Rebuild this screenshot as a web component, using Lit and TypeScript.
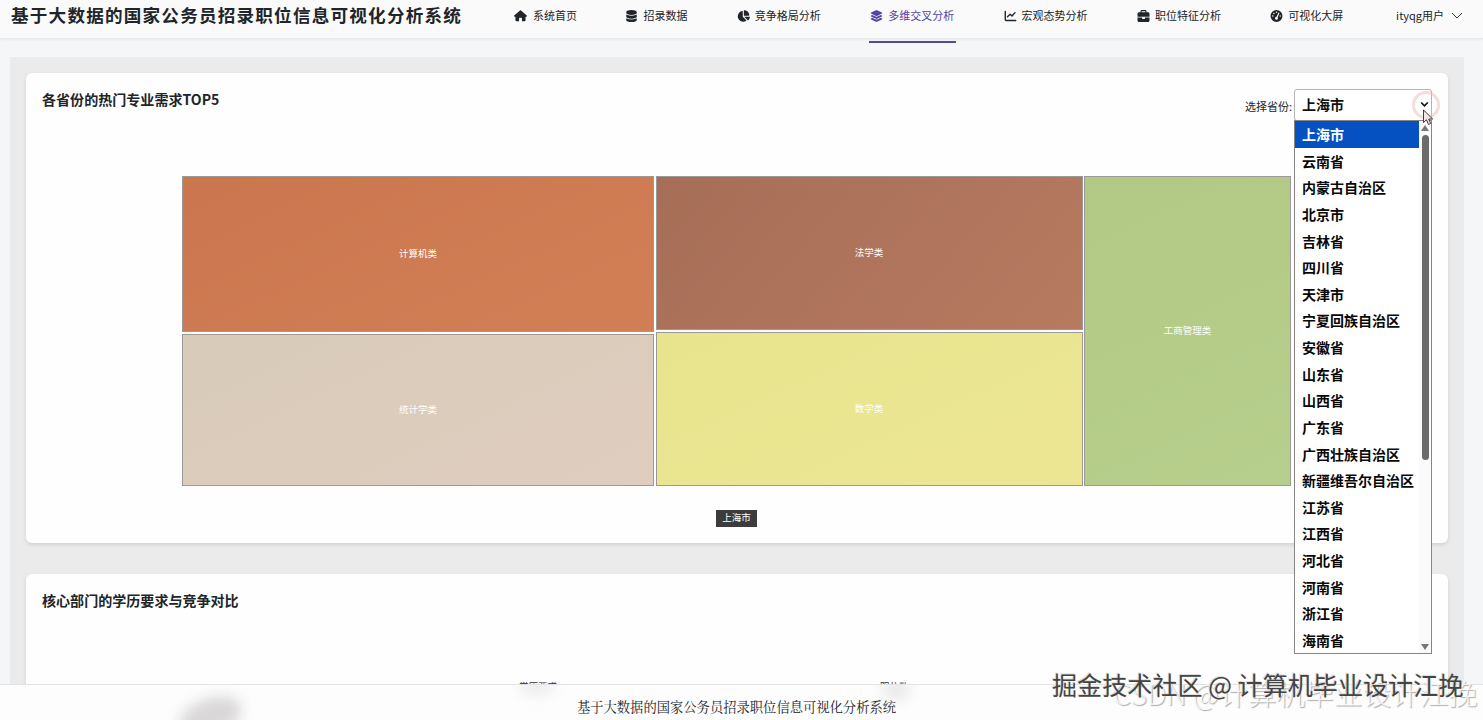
import { LitElement, html, css, svg } from "lit";
import { customElement } from "lit/decorators.js";

const icons: Record<string, { box: string; body: unknown }> = {
  home: { box: "0 0 576 512", body: svg`<path d="M575.8 255.500c0 18-15 32.100-32 32.100h-32l.7 160.200c0 22.100-17.900 40.200-40 40.200H352V360c0-13.300-10.700-24-24-24h-80c-13.300 0-24 10.700-24 24v128H104c-22 0-40-18-40-40V287.600H32c-18 0-32-14-32-32.100 0-9 3-17 10-24L266.400 8c7-7 15-8 22-8s15 2 21 7l255.400 224.500c8 7 12 15 11 24z"/>` },
  db: { box: "0 0 448 512", body: svg`<path d="M448 80v48c0 44-100 80-224 80S0 172 0 128V80C0 36 100 0 224 0s224 36 224 80zM393 215c21-7 40-17 55-28v101c0 44-100 80-224 80S0 332 0 288V187c15 11 34 21 55 28 44 16 104 25 169 25s125-9 169-25zM0 347c15 11 34 21 55 28 44 16 104 25 169 25s125-9 169-25c21-7 40-17 55-28v85c0 44-100 80-224 80S0 476 0 432z"/>` },
  pie: { box: "0 0 576 512", body: svg`<path d="M304 240V16.600c0-9 7-16.600 16-16.600 124 0 224 100 224 224 0 9-7.600 16-16.600 16zM32 272C32 151 122 50 239 34c9-1 17 6 17 15v239l157 157c7 7 6 18-2 23-39 28-87 44-139 44C140 512 32 405 32 272zm526 16c9 0 16 8 15 17-8 56-35 106-74 143-6 6-16 5-22-1L320 288z"/>` },
  layers: { box: "0 0 576 512", body: svg`<path d="M265 5c15-7 31-7 46 0l219 101c8 4 14 13 14 22s-6 18-14 22L311 251c-15 7-31 7-46 0L46 150c-8-4-14-13-14-22s6-18 14-22zM477 210l53 24c8 4 14 13 14 22s-6 18-14 22L311 379c-15 7-31 7-46 0L46 278c-8-4-14-13-14-22s6-18 14-22l53-24 152 70c24 11 50 11 74 0zM325 408l152-70 53 24c8 4 14 13 14 22s-6 18-14 22L311 507c-15 7-31 7-46 0L46 406c-8-4-14-13-14-22s6-18 14-22l53-24 152 70c24 11 50 11 74 0z"/>` },
  line: { box: "0 0 512 512", body: svg`<path fill="none" stroke="currentColor" stroke-width="60" stroke-linecap="round" stroke-linejoin="round" d="M32 64v336q0 48 48 48h400M128 288l112-112 80 80 128-144"/>` },
  bag: { box: "0 0 512 512", body: svg`<path d="M176 56v40h160V56c0-4-4-8-8-8H184c-4 0-8 4-8 8zm-48 40V56c0-31 25-56 56-56h144c31 0 56 25 56 56v40h64c35 0 64 29 64 64v128H0V160c0-35 29-64 64-64zm384 224v128c0 35-29 64-64 64H64c-35 0-64-29-64-64V320h192v32c0 18 14 32 32 32h64c18 0 32-14 32-32v-32z"/>` },
  gauge: { box: "0 0 512 512", body: svg`<path fill-rule="evenodd" d="M0 256a256 256 0 1 0 512 0a256 256 0 1 0-512 0zM288 96a32 32 0 1 0-64 0a32 32 0 1 0 64 0zM256 416c35 0 64-29 64-64 0-17-7-33-18-45l76-162c5-12 0-26-12-32s-26 0-32 12l-76 163h-2c-35 0-64 29-64 64s29 64 64 64zM176 144a32 32 0 1 0-64 0a32 32 0 1 0 64 0zM96 288a32 32 0 1 0 0-64a32 32 0 1 0 0 64zm352-32a32 32 0 1 0-64 0a32 32 0 1 0 64 0z"/>` },
};

const nav = [
  { icon: "home", label: "系统首页" },
  { icon: "db", label: "招录数据" },
  { icon: "pie", label: "竞争格局分析" },
  { icon: "layers", label: "多维交叉分析", active: true },
  { icon: "line", label: "宏观态势分析" },
  { icon: "bag", label: "职位特征分析" },
  { icon: "gauge", label: "可视化大屏" },
];

const provinces = [
  "上海市", "云南省", "内蒙古自治区", "北京市", "吉林省", "四川省", "天津市",
  "宁夏回族自治区", "安徽省", "山东省", "山西省", "广东省", "广西壮族自治区",
  "新疆维吾尔自治区", "江苏省", "江西省", "河北省", "河南省", "浙江省", "海南省",
];

@customElement("app-root")
class AppRoot extends LitElement {
  static styles = css`
    :host { display: block; height: 720px; position: relative; overflow: hidden; color: #212529; background: #f4f6f8; font: 12px "Noto Sans CJK SC", sans-serif; }
    * { box-sizing: border-box; }
    .page { height: 720px; display: flex; flex-direction: column; }
    header { flex: none; height: 39px; background: #fafafa; border-bottom: 1px solid #e7e9ea; box-shadow: 0 1px 2px #0000000d; display: flex; padding-left: 11px; white-space: nowrap; }
    .brand { flex: none; width: 503px; height: 32px; font: 700 17.6px/30px "KaiTi", "STKaiti", "Noto Sans CJK SC", sans-serif; letter-spacing: 1.2px; }
    nav { display: flex; gap: 48.4px; }
    .item { height: 43px; display: flex; gap: 6px; line-height: 30px; font-size: 11px; }
    .item svg { width: 13px; height: 12px; margin-top: 10px; fill: currentColor; }
    .item:nth-child(n + 2) { gap: 5px; padding-right: 1px; }
    .item.active { color: #5344a5; border-bottom: 2px solid #5648a0; padding: 0 2px 0 1px; margin: 0 -1px; position: relative; }
    .user { margin-left: auto; margin-right: 20px; display: flex; line-height: 30px; font-size: 11px; gap: 7px; }
    .user svg { width: 12px; height: 12px; margin-top: 9px; }
    main { flex: 1; margin: 18px 19px 0 10px; padding: 16px 16px 0; background: #ebebeb; display: flex; flex-direction: column; gap: 31px; }
    .card { flex: none; height: 470px; background: #fefefe; border-radius: 6px; box-shadow: 0 2px 4px #0000001c; padding: 16px 16px 0; }
    .head { display: flex; justify-content: space-between; height: 32px; }
    h2 { margin: 0; font-size: 14.05px; line-height: 20px; height: 22px; font-weight: 700; }
    .filter { display: flex; align-items: center; gap: 2px; font-size: 11px; white-space: nowrap; }
    .label { padding-top: 2px; }
    .select { position: relative; width: 138px; height: 32px; border: 1px solid #b5b5b5; border-radius: 3px; background: #fff; padding-left: 7px; font-size: 14px; font-weight: 700; line-height: 29px; color: #111; }
    .select .chev { position: absolute; right: 2px; top: 10px; width: 9px; height: 9px; }
    .menu { position: absolute; left: -1px; top: 30px; width: 138px; height: 534px; border: 1px solid #858585; background: #fff; display: flex; z-index: 3; }
    .options { flex: 1; }
    .option { height: 26.640px; line-height: 27px; padding-left: 7px; color: #080808; }
    .option.on { background: #0551c2; color: #fff; }
    .bar { width: 12px; background: #fafafa; display: flex; flex-direction: column; align-items: center; padding: 4px 0 3px; }
    .bar svg { width: 8px; height: 6px; flex: none; fill: #777; }
    .thumb { width: 7px; height: 325px; border-radius: 4px; background: #6b6b6b; margin-top: 4px; }
    .spacer { flex: 1; }
    .ring { position: absolute; right: -9px; top: 1px; width: 28px; height: 28px; border: 3px solid #efb9b980; border-radius: 50%; z-index: 4; }
    .cursor { position: absolute; left: 127px; top: 19px; width: 12px; height: 17px; z-index: 5; }
    .treemap { width: 1109px; height: 310px; margin: 55px 0 0 140px; display: grid; grid-template-columns: 472px 427px 207px; column-gap: 1.5px; }
    .col { display: flex; flex-direction: column; gap: 2px; }
    .cell { border: 1px solid #9d9995; color: #fff; font-size: 9.500px; display: flex; align-items: center; justify-content: center; flex: none; padding-bottom: 2px; }
    .c1 { height: 156px; background: linear-gradient(155deg, #cb764e, #d27f56); }
    .c2 { height: 152px; background: linear-gradient(155deg, #d8cbb9, #dfcdbf); }
    .c3 { height: 154px; background: linear-gradient(130deg, #a76e57, #b67a60); }
    .c4 { height: 154px; background: linear-gradient(155deg, #e8e48d, #ece693); }
    .c5 { height: 310px; background: linear-gradient(155deg, #b1c984, #b7cf8c); }
    .crumb { width: 41px; height: 17px; margin: 24px 0 0 674px; background: #3c3c3c; color: #fff; font-size: 9.500px; line-height: 15px; text-align: center; }
    .axis { display: flex; padding: 67px 0 0 477px; gap: 323px; font-size: 9.500px; line-height: 14px; color: #333; }
    footer { position: absolute; left: 0; right: 0; bottom: 0; height: 36px; background: #fdfdfd; border-top: 1px solid #e2e2e2; text-align: center; padding-right: 10px; font: 13.300px/43px "STSong", "Noto Serif CJK SC", "Noto Sans CJK SC", serif; overflow: hidden; z-index: 2; }
    .smudge { position: absolute; border-radius: 50%; filter: blur(7px); background: #d9d7d7; }
    .s1 { left: 177px; top: 14px; width: 66px; height: 38px; transform: rotate(-22deg); }
    .s2 { left: 520px; top: -5px; width: 34px; height: 14px; background: #e8e8e8; }
    .s3 { left: 883px; top: -5px; width: 26px; height: 20px; background: #e6e6e6; }
    .mark { position: absolute; white-space: nowrap; z-index: 6; }
    .m1 { left: 1113px; top: 675px; font-size: 28.7px; font-weight: 300; line-height: 36px; color: #fffc; text-shadow: 1px 1px 1px #7779; }
    .m2 { left: 1052px; top: 666px; font-size: 25.1px; line-height: 36px; color: #444; text-shadow: -1px -1px 0 #ddd; }
  `;

  icon(name: string) {
    const i = icons[name];
    return html`<svg viewBox=${i.box}>${i.body}</svg>`;
  }

  render() {
    return html`
      <div class="page">
        <header>
          <div class="brand">基于大数据的国家公务员招录职位信息可视化分析系统</div>
          <nav>${nav.map((n) => html`<div class="item ${n.active ? "active" : ""}">${this.icon(n.icon)}<span>${n.label}</span></div>`)}</nav>
          <div class="user"><span>ityqg用户</span><svg viewBox="0 0 12 12" fill="none" stroke="#333"><path d="M1 4l5 5 5-5"/></svg></div>
        </header>
        <main>
          <section class="card">
            <div class="head">
              <h2>各省份的热门专业需求TOP5</h2>
              <div class="filter">
                <span class="label">选择省份:</span>
                <div class="select">上海市
                  <svg class="chev" viewBox="0 0 9 9" fill="none" stroke="#111" stroke-width="1.7"><path d="M1.200 2.500l3.300 3.300 3.300-3.300"/></svg>
                  <div class="menu">
                    <div class="options">${provinces.map((p, i) => html`<div class="option ${i === 0 ? "on" : ""}">${p}</div>`)}</div>
                    <div class="bar">
                      <svg viewBox="0 0 8 6"><path d="M4 0l4 6H0z"/></svg>
                      <div class="thumb"></div><div class="spacer"></div>
                      <svg viewBox="0 0 8 6"><path d="M0 0h8L4 6z"/></svg>
                    </div>
                  </div>
                  <div class="ring"></div>
                  <svg class="cursor" viewBox="0 0 12 17"><path d="M1.500 1v12.500l3-2.700 2 4.700 2.200-1-2-4.500h4z" fill="#f6e6e6" stroke="#49383c"/></svg>
                </div>
              </div>
            </div>
            <div class="treemap">
              <div class="col"><div class="cell c1">计算机类</div><div class="cell c2">统计学类</div></div>
              <div class="col"><div class="cell c3">法学类</div><div class="cell c4">数学类</div></div>
              <div class="col"><div class="cell c5">工商管理类</div></div>
            </div>
            <div class="crumb">上海市</div>
          </section>
          <section class="card">
            <h2>核心部门的学历要求与竞争对比</h2>
            <div class="axis"><span>学历要求</span><span>职位数</span></div>
          </section>
        </main>
      </div>
      <footer>
        <div class="smudge s1"></div><div class="smudge s2"></div><div class="smudge s3"></div>
        基于大数据的国家公务员招录职位信息可视化分析系统
      </footer>
      <div class="mark m1">CSDN @计算机毕业设计江挽</div>
      <div class="mark m2">掘金技术社区 @ 计算机毕业设计江挽</div>
    `;
  }
}
